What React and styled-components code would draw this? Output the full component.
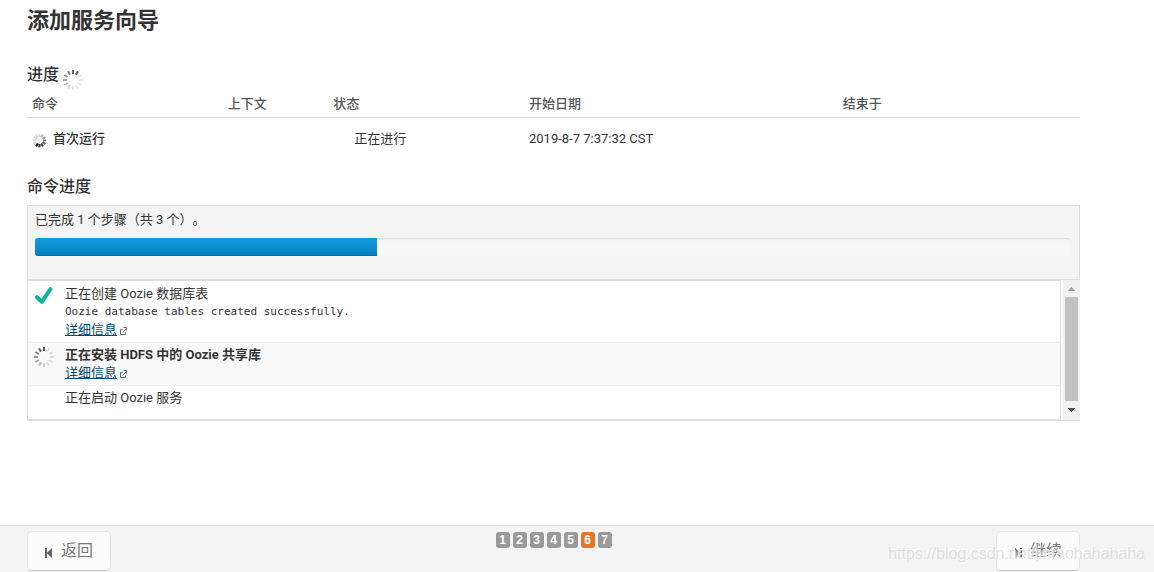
import React from 'react';
import styled, { createGlobalStyle } from 'styled-components';

const GlobalStyle = createGlobalStyle`
  * {
    box-sizing: border-box;
  }
  body {
    margin: 0;
    background: #fff;
    color: #333;
    font-family: Roboto, 'Noto Sans CJK SC', sans-serif;
    font-size: 13px;
    line-height: 18px;
    text-spacing-trim: space-all;
  }
`;

const Page = styled.div`
  display: flex;
  flex-direction: column;
  min-height: 100vh;
`;

const Content = styled.main`
  flex: 1;
  padding: 5px 74px 0 27px;
`;

const Title = styled.h1`
  margin: 0;
  font-size: 22px;
  line-height: 32px;
`;

const SectionTitle = styled.h2`
  display: flex;
  align-items: center;
  gap: 3px;
  margin: ${(props) => props.$top}px 0 0;
  font-size: 16px;
  font-weight: 500;
  line-height: 24px;

  svg {
    margin-top: 5px;
    margin-bottom: -5px;
  }
`;

const CommandTable = styled.table`
  width: 100%;
  margin-top: 4px;
  border-collapse: collapse;
  table-layout: fixed;
`;

const HeadCell = styled.th`
  width: ${(props) => props.$width};
  padding: 4px 5px;
  border-bottom: 1px solid #ddd;
  color: #555;
  font-weight: 500;
  text-align: left;
`;

const Cell = styled.td`
  padding: 12px 5px 11px;
`;

const CommandName = styled.div`
  display: flex;
  align-items: center;
  gap: 6px;
  height: 18px;
  font-weight: 500;

  svg {
    margin-top: 3px;
  }
`;

const Status = styled.span`
  padding-left: 21px;
`;

const Summary = styled.section`
  height: 75px;
  margin-top: 6px;
  padding: 5px 8px 0 7px;
  border: 1px solid #ddd;
  background: #f4f4f4;
`;

const SummaryText = styled.p`
  margin: 0 0 9px;
`;

const Track = styled.div`
  height: 18px;
  border-radius: 3px;
  background: linear-gradient(#f5f5f5, #f9f9f9);
  box-shadow: inset 0 1px 2px rgba(0, 0, 0, 0.1);
  overflow: hidden;
`;

const Bar = styled.div`
  height: 100%;
  background: linear-gradient(#149bdf, #0480be);
  box-shadow: inset 0 -1px 0 rgba(0, 0, 0, 0.15);
`;

const StepsPane = styled.section`
  display: flex;
  gap: 2px;
  border-bottom: 1px solid #ddd;
`;

const StepList = styled.ul`
  flex: 1;
  margin: 0;
  padding: 0;
  border: 1px solid #ddd;
  list-style: none;
`;

const Step = styled.li`
  display: flex;
  gap: 10px;
  padding: 3px 5px;
  background: ${(props) => (props.$active ? '#f9f9f9' : '#fff')};
  font-weight: ${(props) => (props.$active ? 700 : 400)};

  & + & {
    border-top: 1px solid #eee;
  }
  &:first-child {
    padding-top: 4px;
  }
  &:last-child {
    padding-bottom: 12px;
  }
`;

const StepIcon = styled.div`
  display: flex;
  justify-content: center;
  flex: 0 0 22px;
  height: 18px;
`;

const Message = styled.pre`
  margin: 0;
  font-family: 'DejaVu Sans Mono', monospace;
  font-size: 11px;
  line-height: 18px;
`;

const DetailLink = styled.a`
  display: flex;
  align-items: center;
  gap: 2px;
  width: max-content;
  color: #004b75;
  font-weight: 400;
  text-decoration: none;

  span {
    text-decoration: underline;
  }
`;

const ScrollBar = styled.div`
  display: flex;
  flex-direction: column;
  align-items: center;
  width: 17px;
  background: #f1f1f1;
`;

const ScrollThumb = styled.div`
  width: 13px;
  height: 104px;
  background: #c1c1c1;
`;

const Footer = styled.footer`
  display: grid;
  grid-template-columns: 1fr auto 1fr;
  align-items: start;
  height: 47px;
  padding: 5px 74px 0 27px;
  border-top: 1px solid #ddd;
  background: #f4f4f4;
`;

const NavButton = styled.button`
  display: flex;
  align-items: center;
  justify-content: center;
  justify-self: ${(props) => props.$side};
  gap: 8px;
  width: 84px;
  height: 40px;
  padding: 0;
  border: 1px solid #e6e6e6;
  border-bottom-color: #c4c4c4;
  border-radius: 5px;
  background: #fcfcfc;
  color: #777;
  font-family: inherit;
  font-size: 16px;
  line-height: 24px;

  svg {
    margin-top: 3px;
  }
`;

const Pager = styled.ol`
  display: flex;
  gap: 3px;
  margin: 0;
  padding: 0;
  list-style: none;
`;

const PageNumber = styled.li`
  width: 14px;
  height: 16px;
  margin-top: 1px;
  border-radius: 3px;
  background: ${(props) => (props.$current ? '#e5752b' : '#999')};
  color: #fff;
  font-family: 'Liberation Sans', sans-serif;
  font-size: 12px;
  font-weight: 700;
  line-height: 16px;
  text-align: center;
`;

const Watermark = styled.div`
  position: absolute;
  right: 9px;
  bottom: 8px;
  color: rgba(215, 215, 215, 0.75);
  font-family: 'Liberation Sans', sans-serif;
  font-size: 16px;
  line-height: 20px;
  text-shadow: -1px -1px 0 rgba(255, 255, 255, 0.8);
  pointer-events: none;
`;

const columns = [
  { label: '命令', width: '18.6%' },
  { label: '上下文', width: '10%' },
  { label: '状态', width: '18.6%' },
  { label: '开始日期', width: '29.8%' },
  { label: '结束于', width: '23%' },
];

const steps = [
  {
    title: '正在创建 Oozie 数据库表',
    message: 'Oozie database tables created successfully.',
    state: 'done',
    details: true,
  },
  { title: '正在安装 HDFS 中的 Oozie 共享库', state: 'running', details: true },
  { title: '正在启动 Oozie 服务', state: 'waiting' },
];

const pages = [1, 2, 3, 4, 5, 6, 7];
const currentPage = 6;

function Spinner({ size, start = 0, color = '#555', thickness = 2 }) {
  return (
    <svg width={size} height={size} viewBox="0 0 22 22" aria-hidden="true">
      {Array.from({ length: 12 }, (_, i) => (
        <line
          key={i}
          x1="11"
          y1="1"
          x2="11"
          y2={thickness > 2 ? 6 : 5}
          stroke={color}
          strokeWidth={thickness}
          opacity={Math.max(0.16, 1 - ((start - i + 12) % 12) * 0.12)}
          transform={`rotate(${i * 30} 11 11)`}
        />
      ))}
    </svg>
  );
}

function Check() {
  return (
    <svg width="19" height="20" viewBox="0 0 19 20" aria-hidden="true">
      <path
        d="M2 12.2 L6.8 16.8 L15.4 4.2"
        fill="none"
        stroke="#0db39a"
        strokeWidth="4"
        strokeLinecap="round"
        strokeLinejoin="round"
      />
    </svg>
  );
}

function ExternalIcon() {
  return (
    <svg width="9" height="10" viewBox="0 0 9 10" fill="none" stroke="#666" aria-hidden="true">
      <path d="M3.5 4.5H1.5V9.5H6.5V7.5" />
      <path d="M3.5 7.5L7.5 3.5M4.5 2.5H7.5V5.5" />
    </svg>
  );
}

function StepGlyph({ back }) {
  return (
    <svg width="8" height="12" viewBox="0 0 8 12" fill="#666" aria-hidden="true">
      {back ? (
        <path d="M0 1H2V5.5L7 1V11L2 6.5V11H0Z" />
      ) : (
        <path d="M8 1H6V5.5L1 1V11L6 6.5V11H8Z" />
      )}
    </svg>
  );
}

function Arrow({ down }) {
  return (
    <svg width="17" height="17" viewBox="0 0 17 17" shapeRendering="crispEdges" aria-hidden="true">
      {down ? (
        <path d="M5 7H12L8.5 11Z" fill="#505050" />
      ) : (
        <path d="M5 11H12L8.5 7Z" fill="#a3a3a3" />
      )}
    </svg>
  );
}

function App() {
  return (
    <Page>
      <GlobalStyle />
      <Content>
        <Title>添加服务向导</Title>
        <SectionTitle $top={26}>
          进度
          <Spinner size={22} start={1} />
        </SectionTitle>
        <CommandTable>
          <thead>
            <tr>
              {columns.map((column) => (
                <HeadCell key={column.label} $width={column.width}>
                  {column.label}
                </HeadCell>
              ))}
            </tr>
          </thead>
          <tbody>
            <tr>
              <Cell>
                <CommandName>
                  <Spinner size={15} start={7} color="#111" thickness={3} />
                  首次运行
                </CommandName>
              </Cell>
              <Cell />
              <Cell>
                <Status>正在进行</Status>
              </Cell>
              <Cell>2019-8-7 7:37:32 CST</Cell>
              <Cell />
            </tr>
          </tbody>
        </CommandTable>
        <SectionTitle $top={16}>命令进度</SectionTitle>
        <Summary>
          <SummaryText>已完成 1 个步骤（共 3 个）。</SummaryText>
          <Track role="progressbar" aria-valuenow={33} aria-valuemin={0} aria-valuemax={100}>
            <Bar style={{ width: '33%' }} />
          </Track>
        </Summary>
        <StepsPane>
          <StepList>
            {steps.map((step) => (
              <Step key={step.title} $active={step.state === 'running'}>
                <StepIcon>
                  {step.state === 'done' && <Check />}
                  {step.state === 'running' && <Spinner size={22} />}
                </StepIcon>
                <div>
                  <div>{step.title}</div>
                  {step.message && <Message>{step.message}</Message>}
                  {step.details && (
                    <DetailLink href="#details">
                      <span>详细信息</span>
                      <ExternalIcon />
                    </DetailLink>
                  )}
                </div>
              </Step>
            ))}
          </StepList>
          <ScrollBar>
            <Arrow />
            <ScrollThumb />
            <Arrow down />
          </ScrollBar>
        </StepsPane>
      </Content>
      <Footer>
        <NavButton type="button" $side="start">
          <StepGlyph back />
          返回
        </NavButton>
        <Pager>
          {pages.map((page) => (
            <PageNumber key={page} $current={page === currentPage}>
              {page}
            </PageNumber>
          ))}
        </Pager>
        <NavButton type="button" $side="end">
          <StepGlyph />
          继续
        </NavButton>
      </Footer>
      <Watermark>https://blog.csdn.net/jintaohahahaha</Watermark>
    </Page>
  );
}

export default App;
